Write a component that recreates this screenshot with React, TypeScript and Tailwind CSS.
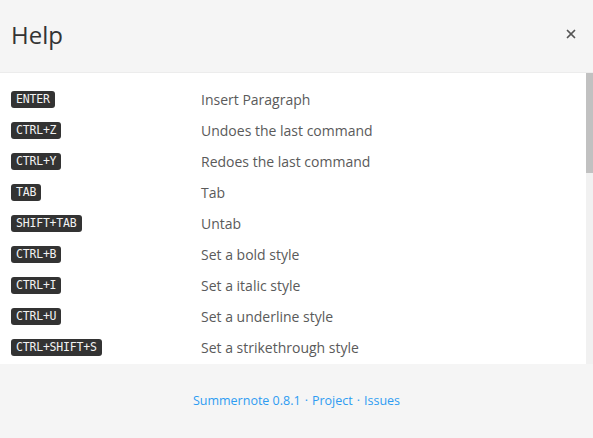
import { X } from 'lucide-react';

const shortcuts = [
  { keys: 'ENTER', label: 'Insert Paragraph' },
  { keys: 'CTRL+Z', label: 'Undoes the last command' },
  { keys: 'CTRL+Y', label: 'Redoes the last command' },
  { keys: 'TAB', label: 'Tab' },
  { keys: 'SHIFT+TAB', label: 'Untab' },
  { keys: 'CTRL+B', label: 'Set a bold style' },
  { keys: 'CTRL+I', label: 'Set a italic style' },
  { keys: 'CTRL+U', label: 'Set a underline style' },
  { keys: 'CTRL+SHIFT+S', label: 'Set a strikethrough style' },
];

export default function App() {
  return (
    <div className="w-[593px] h-[438px] flex flex-col bg-[#f5f5f5] font-['Open_Sans',sans-serif] overflow-hidden">
      {/* Header */}
      <div className="h-[73px] flex items-center justify-between pl-[11px] pr-[15px] border-b border-[#ececec] shrink-0">
        <h4 className="text-[24px] text-[#333] leading-none -mt-[2px]">Help</h4>
        <X className="w-[14px] h-[14px] text-[#555] -mt-[5px]" strokeWidth={3} />
      </div>

      {/* Body */}
      <div className="h-[291px] flex bg-white shrink-0">
        <div className="flex-1 pt-[11px] pl-[11px]">
          {shortcuts.map((s) => (
            <div key={s.keys} className="h-[31px] flex items-center">
              <div className="w-[190px] flex">
                <span className="bg-[#333] text-[#f2f2f2] rounded-[3px] px-[5px] h-[17px] flex items-center text-[11.5px] font-['DejaVu_Sans_Mono',monospace] tracking-[-0.2px]">
                  {s.keys}
                </span>
              </div>
              <span className="text-[14px] text-[#5a5a5a]">{s.label}</span>
            </div>
          ))}
        </div>

        {/* Scrollbar */}
        <div className="w-[7px] bg-[#f1f1f1] flex flex-col">
          <div className="h-[100px] bg-[#c1c1c1]" />
        </div>
      </div>

      {/* Footer */}
      <div className="flex-1 flex items-center justify-center text-[12.5px] text-[#2e9cf2]">
        <span>Summernote 0.8.1</span>
        <span className="mx-[4px]">·</span>
        <span>Project</span>
        <span className="mx-[4px]">·</span>
        <span>Issues</span>
      </div>
    </div>
  );
}
